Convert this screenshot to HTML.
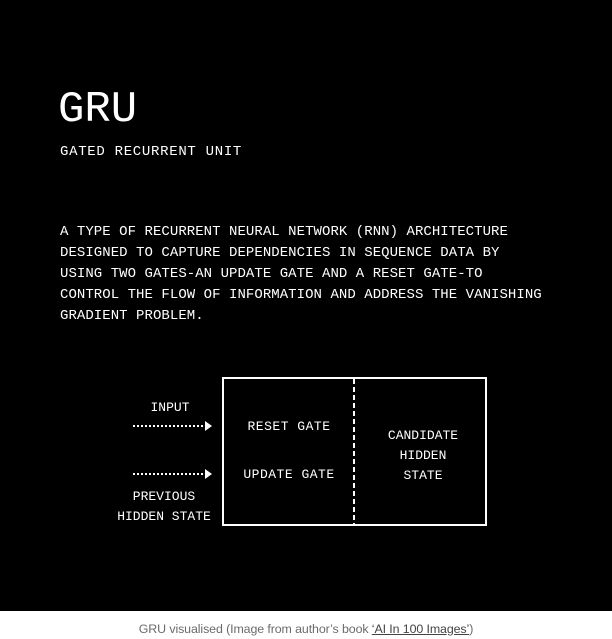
<!DOCTYPE html>
<html><head><style>
body{margin:0;width:612px;height:639px;background:#fff;overflow:hidden;font-family:"Liberation Mono",monospace;}
.b{position:absolute;left:0;top:0;width:612px;height:611px;background:#000;}
.t{position:absolute;color:#fff;white-space:pre;line-height:1;}
.c{text-align:center;transform:translateX(-50%);}
.cap{position:absolute;top:622px;left:0;width:612px;text-align:center;font-family:"Liberation Sans",sans-serif;font-size:12.4px;letter-spacing:-0.1px;color:#6b6b6b;}
.cap u{color:#444;}
</style></head><body>
<div class="b"></div>
<div class="t" style="left:58px;top:88px;font-size:44px;">GRU</div>
<div class="t" style="left:60px;top:145px;font-size:14px;letter-spacing:0.7px;">GATED RECURRENT UNIT</div>
<div class="t" style="left:60px;top:222px;font-size:14px;line-height:21px;letter-spacing:0.05px;">A TYPE OF RECURRENT NEURAL NETWORK (RNN) ARCHITECTURE
DESIGNED TO CAPTURE DEPENDENCIES IN SEQUENCE DATA BY
USING TWO GATES-AN UPDATE GATE AND A RESET GATE-TO
CONTROL THE FLOW OF INFORMATION AND ADDRESS THE VANISHING
GRADIENT PROBLEM.</div>
<svg style="position:absolute;left:0;top:0" width="612" height="611">
<rect x="223" y="378" width="263" height="147" fill="none" stroke="#fff" stroke-width="2"/>
<line x1="354" y1="379" x2="354" y2="524" stroke="#fff" stroke-width="2" stroke-dasharray="5,3"/>
<line x1="133" y1="426" x2="205" y2="426" stroke="#fff" stroke-width="2" stroke-dasharray="2,2"/>
<polygon points="205,421 212,426 205,431" fill="#fff"/>
<line x1="133" y1="474" x2="205" y2="474" stroke="#fff" stroke-width="2" stroke-dasharray="2,2"/>
<polygon points="205,469 212,474 205,479" fill="#fff"/>
</svg>
<div class="t c" style="left:170px;top:401px;font-size:13px;">INPUT</div>
<div class="t c" style="left:289px;top:420px;font-size:13px;letter-spacing:0.5px;">RESET GATE</div>
<div class="t c" style="left:289px;top:468px;font-size:13px;letter-spacing:0.5px;">UPDATE GATE</div>
<div class="t c" style="left:423px;top:426px;font-size:13px;line-height:20px;text-align:center;">CANDIDATE
HIDDEN
STATE</div>
<div class="t c" style="left:164px;top:487px;font-size:13px;line-height:20px;text-align:center;">PREVIOUS
HIDDEN STATE</div>
<div class="cap">GRU visualised (Image from author’s book <u>‘AI In 100 Images’</u>)</div>
</body></html>
